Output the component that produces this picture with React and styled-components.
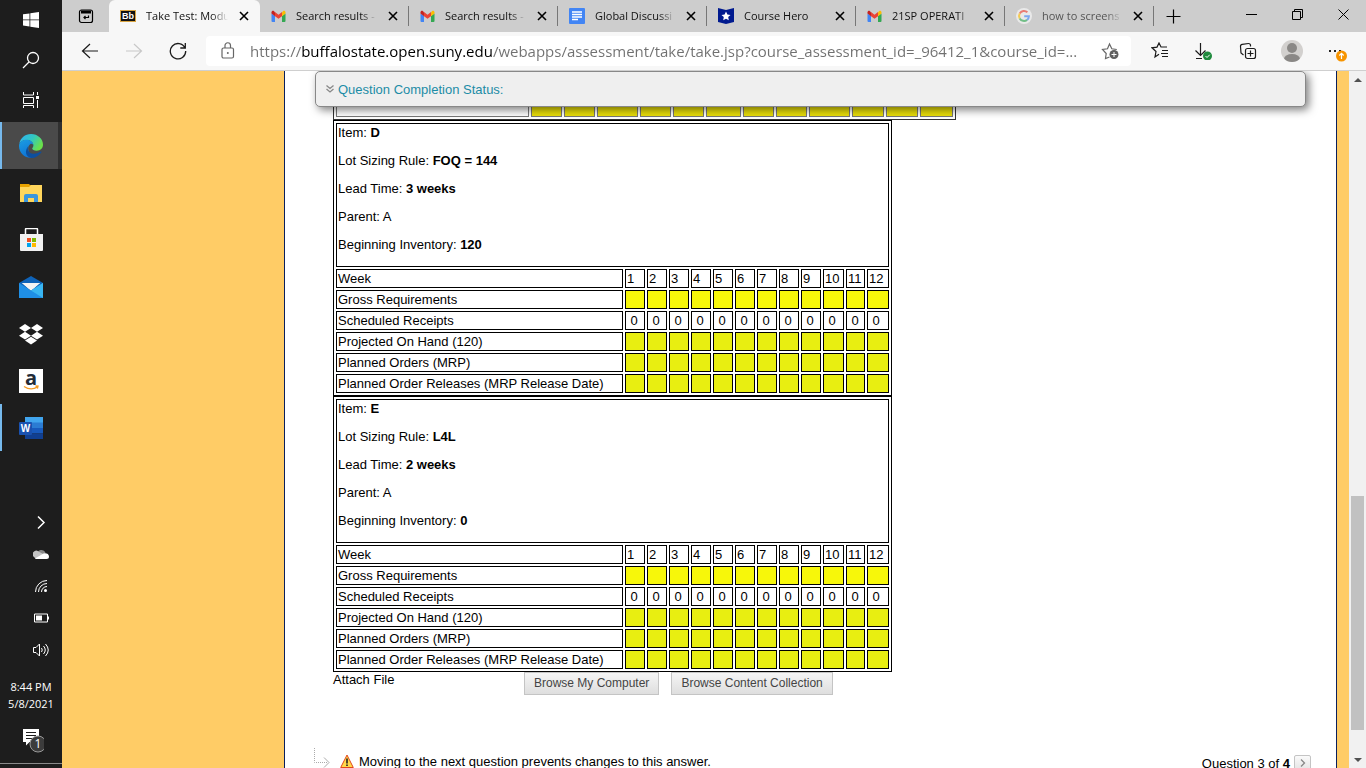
import styled, { createGlobalStyle } from "styled-components";

const SANS = `"Liberation Sans", Arial, sans-serif`;
const UI = `"Open Sans", "Noto Sans", sans-serif`;

const weeks = [1, 2, 3, 4, 5, 6, 7, 8, 9, 10, 11, 12];
const itemCols = [287, 20, 20, 20, 20, 20, 20, 20, 20, 20, 21, 19, 22];
const previousCols = [193, 31, 31, 41, 31, 31, 35, 31, 31, 41, 32, 32, 33];

const rows = [
  { label: "Gross Requirements", fill: "#f7f70a" },
  { label: "Scheduled Receipts", value: "\u00a00" },
  { label: "Projected On Hand (120)", fill: "#e8ee11" },
  { label: "Planned Orders (MRP)", fill: "#e8ee11" },
  { label: "Planned Order Releases (MRP Release Date)", fill: "#e8ee11" },
];

const tabs = [
  { title: "Take Test: Modu", icon: "bb", active: true },
  { title: "Search results -", icon: "gmail" },
  { title: "Search results -", icon: "gmail" },
  { title: "Global Discussi", icon: "docs" },
  { title: "Course Hero", icon: "hero" },
  { title: "21SP OPERATI", icon: "gmail" },
  { title: "how to screens", icon: "google", faded: true },
];

/* ---------- icons ---------- */

const Line = ({ size = 18, children, ...rest }) => (
  <svg width={size} height={size} viewBox={`0 0 ${size} ${size}`} fill="none" stroke="currentColor" aria-hidden="true" {...rest}>
    {children}
  </svg>
);

const favicons = {
  bb: (
    <svg width="16" height="16" viewBox="0 0 16 16">
      <rect x="0.5" y="2.5" width="15" height="11" fill="#111" stroke="#d9a441" />
      <text x="8" y="11" textAnchor="middle" fontFamily="Liberation Sans" fontWeight="700" fontSize="9" fill="#fff">Bb</text>
    </svg>
  ),
  gmail: (
    <svg width="15" height="15" viewBox="0 0 15 15">
      <path d="M0.5 4.5v7.5a1 1 0 0 0 1 1H4V7z" fill="#4285f4" />
      <path d="M14.5 4.5v7.5a1 1 0 0 1-1 1H11V7z" fill="#34a853" />
      <path d="M11 3.2v4l3.5-2.6V3.4c0-1.3-1.5-2-2.5-1.2z" fill="#fbbc04" />
      <path d="M4 3.2v4L0.5 4.6V3.4C0.5 2.1 2 1.4 3 2.2z" fill="#c5221f" />
      <path d="M4 3l3.5 2.7L11 3v4.2L7.5 9.8 4 7.2z" fill="#ea4335" />
    </svg>
  ),
  docs: (
    <svg width="16" height="16" viewBox="0 0 16 16">
      <rect width="16" height="16" rx="1" fill="#4285f4" />
      <path d="M3 4h10M3 6.500h10M3 9h10M3 11.500h6" stroke="#fff" strokeWidth="1.400" />
    </svg>
  ),
  hero: (
    <svg width="16" height="16" viewBox="0 0 16 16">
      <path d="M0 0l8 2 8-2v14l-8 2-8-2z" fill="#001a8f" />
      <path d="M8 3.600l1.400 3 3.100.4-2.300 2.100.6 3.200L8 10.700l-2.800 1.600.6-3.200L3.500 7l3.100-.4z" fill="#fff" />
    </svg>
  ),
  google: (
    <svg width="16" height="16" viewBox="0 0 16 16">
      <circle cx="8" cy="8" r="8" fill="#e9e9e9" />
      <g fill="none" strokeWidth="2" opacity="0.65">
        <path d="M11.400 4.300A5 5 0 0 0 3.700 5.600" stroke="#ea4335" />
        <path d="M3.700 5.600a5 5 0 0 0 0 4.800" stroke="#fbbc04" />
        <path d="M3.700 10.400a5 5 0 0 0 7.400 1.500" stroke="#34a853" />
        <path d="M11.100 11.900A5 5 0 0 0 12.900 8.200H8.200" stroke="#4285f4" />
      </g>
    </svg>
  ),
};

const WindowsLogo = () => (
  <svg width="16" height="16" viewBox="0 0 16 16" fill="#fff">
    <path d="M0 2.300l6.500-.9v6.100H0zM7.300 1.300L16 0v7.500H7.300zM0 8.300h6.500v6.200L0 13.600zM7.300 8.300H16V16l-8.700-1.300z" />
  </svg>
);

const TaskView = () => (
  <Line size={16}>
    <path d="M0.500 0v3h10V0M0.500 5.500h10v6h-10zM0.500 16v-2.500h10V16M14.500 0v3M14.500 8v8" />
    <rect x="13" y="4" width="3" height="3" fill="#fff" stroke="none" />
  </Line>
);

const EdgeLogo = () => (
  <svg width="24" height="24" viewBox="0 0 24 24">
    <defs>
      <linearGradient id="edgeTop" x1="0" y1="0" x2="1" y2="0.500">
        <stop offset="0.100" stopColor="#2fb4ee" />
        <stop offset="0.550" stopColor="#32c8c0" />
        <stop offset="1" stopColor="#6ae04a" />
      </linearGradient>
      <linearGradient id="edgeLeft" x1="0" y1="0" x2="0.400" y2="1">
        <stop offset="0" stopColor="#1b9de2" />
        <stop offset="1" stopColor="#0f74d6" />
      </linearGradient>
    </defs>
    <path d="M0.300 9.800C1.300 4 6 0 12 0c7 0 12 5 12 10.600 0 4-2.800 6.200-6.200 6.200-3 0-4.600-1.200-4.600-2.200 0-.8 1.200-1.200 1.200-3C14.400 8 11 6 7.500 6 3.500 6 1 8 .3 9.800z" fill="url(#edgeTop)" />
    <path d="M0 12C0 8 3.500 5.800 7.500 5.800c4.200 0 6.900 2.700 6.900 5.800-.3-1.500-1.700-2.400-3.200-1.400C8 12 8 20 16 22.800 9 26 0 21 0 12z" fill="url(#edgeLeft)" />
    <path d="M9.300 12c-1.500 3.500.6 7.500 5 7.700 3 .1 5.500-.9 7.500-2.200.5-.3.900.2.600.7C20 22 16 24 12.500 24 7 23.500 5 17 9.300 12z" fill="#0d4f9e" />
  </svg>
);

const FolderIcon = () => (
  <svg width="22" height="18" viewBox="0 0 22 18">
    <path d="M0 0h9l1 1h12v17H0z" fill="#e8a200" />
    <path d="M0 3h9l2-2h11v17H0z" fill="#ffd65c" />
    <path d="M4 18v-6a2 2 0 0 1 2-2h10a2 2 0 0 1 2 2v6h-4v-4H8v4z" fill="#3a96dd" />
  </svg>
);

const StoreIcon = () => (
  <svg width="23" height="24" viewBox="0 0 23 24">
    <path d="M5.500 7V1.500a1 1 0 0 1 1-1h10a1 1 0 0 1 1 1V7" fill="none" stroke="#fff" strokeWidth="1.500" />
    <path d="M0 6h23v16a1 1 0 0 1-1 1H1a1 1 0 0 1-1-1z" fill="#f2f2f2" />
    <path d="M7 10h4v4H7z" fill="#f25022" />
    <path d="M12 10h4v4h-4z" fill="#7fba00" />
    <path d="M7 15h4v4H7z" fill="#00a4ef" />
    <path d="M12 15h4v4h-4z" fill="#ffb900" />
  </svg>
);

const MailIcon = () => (
  <svg width="24" height="24" viewBox="0 0 24 24">
    <path d="M0 8l12-7 12 7v6H0z" fill="#0f63b8" />
    <path d="M3 8h18l-9 8z" fill="#f4f4f4" />
    <path d="M0 8l12 7.500L24 8v15H0z" fill="#1f8fe6" />
    <path d="M24 8v15L12 15.500z" fill="#39b6f2" />
    <path d="M3 8h18l-9 7z" fill="#f4f4f4" />
  </svg>
);

const DropboxIcon = () => (
  <svg width="24" height="22" viewBox="0 0 24 22" fill="#fff">
    <path d="M6 1l6 3.900-6 3.900-6-3.900zM18 1l6 3.900-6 3.900-6-3.900zM6 8.800l6 3.900-6 3.900-6-3.900zM18 8.800l6 3.900-6 3.900-6-3.900zM12 13.700l6 3.800-6 3.900-6-3.900z" />
  </svg>
);

const AmazonIcon = () => (
  <svg width="24" height="24" viewBox="0 0 24 24" overflow="visible">
    <rect width="24" height="24" fill="#fff" />
    <text x="12" y="16" textAnchor="middle" fontFamily="Open Sans" fontWeight="700" fontSize="20" fill="#222c38">a</text>
    <path d="M5 17.500c4.500 3 9.500 3 13.500.400M16.500 17l2.500.2-.6 2.400" fill="none" stroke="#f59b23" strokeWidth="1.300" />
  </svg>
);

const WordIcon = () => (
  <svg width="24" height="22" viewBox="0 0 24 22">
    <path d="M6 0h18v6H6z" fill="#41a5ee" />
    <path d="M6 5.500h18V11H6z" fill="#2b7cd3" />
    <path d="M6 11h18v5.500H6z" fill="#185abd" />
    <path d="M6 16.500h18V22H6z" fill="#103f91" />
    <rect y="5" width="13" height="13" rx="1" fill="#1a52b0" />
    <text x="6.500" y="15" textAnchor="middle" fontFamily="Liberation Sans" fontWeight="700" fontSize="10" fill="#fff">W</text>
  </svg>
);

const PersonIcon = () => (
  <svg width="22" height="22" viewBox="0 0 22 22">
    <clipPath id="avatar"><circle cx="11" cy="11" r="11" /></clipPath>
    <g clipPath="url(#avatar)">
      <rect width="22" height="22" fill="#d2d0ce" />
      <circle cx="11" cy="8" r="5" fill="#8a8886" />
      <path d="M3 19a8 5 0 0 1 16 0v1a11 11 0 0 1-16 0z" fill="#8a8886" />
    </g>
  </svg>
);

/* ---------- pieces ---------- */

const Plan = ({ name, rule, lead, inventory }) => (
  <PlanTable $width={559}>
    <colgroup>
      {itemCols.map((w, i) => <Col key={i} $w={w} />)}
    </colgroup>
    <tbody>
      <tr>
        <Cell colSpan={13}>
          <Info>Item: <b>{name}</b></Info>
          <Info>Lot Sizing Rule: <b>{rule}</b></Info>
          <Info>Lead Time: <b>{lead}</b></Info>
          <Info>Parent: A</Info>
          <Info>Beginning Inventory: <b>{inventory}</b></Info>
        </Cell>
      </tr>
      <tr>
        <Cell>Week</Cell>
        {weeks.map((w) => <Cell key={w}>{w}</Cell>)}
      </tr>
      {rows.map((row) => (
        <tr key={row.label}>
          <Cell>{row.label}</Cell>
          {weeks.map((w) => <Cell key={w} $fill={row.fill}>{row.value}</Cell>)}
        </tr>
      ))}
    </tbody>
  </PlanTable>
);

const Taskbar = () => (
  <Bar>
    <BarGroup>
      <BarButton $h={40} aria-label="Start"><WindowsLogo /></BarButton>
      <BarButton $h={40} aria-label="Search">
        <Line size={18} strokeWidth="1.300"><circle cx="11" cy="7" r="5.500" /><path d="M7 11L1 17" /></Line>
      </BarButton>
      <BarButton $h={40} aria-label="Task View"><TaskView /></BarButton>
    </BarGroup>
    <BarButton $active $open aria-label="Edge"><EdgeLogo /></BarButton>
    <BarButton aria-label="File Explorer"><FolderIcon /></BarButton>
    <BarButton aria-label="Store"><StoreIcon /></BarButton>
    <BarButton aria-label="Mail"><MailIcon /></BarButton>
    <BarButton aria-label="Dropbox"><DropboxIcon /></BarButton>
    <BarButton aria-label="Amazon"><AmazonIcon /></BarButton>
    <BarButton $open aria-label="Word"><WordIcon /></BarButton>
    <Tray>
      <BarButton $h={32} aria-label="Hidden icons">
        <Line size={16} strokeWidth="1.500"><path d="M5 2.500L11 8.500 5 14.500" /></Line>
      </BarButton>
      <BarButton $h={32} aria-label="OneDrive">
        <svg width="16" height="12" viewBox="0 0 16 12">
          <path d="M4 6a4.500 4.500 0 0 1 8.500-1.500L9 8z" fill="#8a8a8a" />
          <path d="M1 9a3.500 3.500 0 0 1 4.500-5.500L12 7 9 11H3z" fill="#c4c4c4" />
          <path d="M2 10.500L10.500 5.500c2-1 5.500 0 5.500 3a2.500 2.500 0 0 1-2.500 2.500H3z" fill="#fff" />
        </svg>
      </BarButton>
      <BarButton $h={32} aria-label="Network">
        <Line size={14}>
          <path d="M1.500 13A11.500 11.500 0 0 1 13 1.500M4.500 13A8.500 8.500 0 0 1 13 4.500M7.500 13A5.500 5.500 0 0 1 13 7.500" />
          <circle cx="11.500" cy="11.500" r="1.500" fill="#fff" stroke="none" />
        </Line>
      </BarButton>
      <BarButton $h={32} aria-label="Battery">
        <svg width="16" height="10" viewBox="0 0 16 10">
          <path d="M1.500 1h13v8h-13z" fill="none" stroke="#fff" />
          <path d="M3 2.500h6v5H3zM15 3.500h1v3h-1z" fill="#fff" />
        </svg>
      </BarButton>
      <BarButton $h={32} aria-label="Volume">
        <Line size={16}>
          <path d="M0.500 5.500h2.500l3.500-3.500v12L3 10.500H.5zM8.500 6q1.500 2 0 4M10.500 4q3.500 4 0 8M12.500 2q5.500 6 0 12" />
        </Line>
      </BarButton>
    </Tray>
    <Clock>
      <span>8:44 PM</span>
      <span>5/8/2021</span>
    </Clock>
    <BarButton $h={46} aria-label="Notifications">
      <svg width="26" height="26" viewBox="0 0 26 26">
        <path d="M5 2h16v13H11.500l-3.500 3.500V15H5z" fill="#fff" />
        <path d="M8 5.500h10M8 8.500h10M8 11.500h7" stroke="#1d1d1d" />
        <circle cx="20" cy="17" r="8" fill="#3c3c3c" stroke="#9a9a9a" transform="translate(0 0)" />
        <text x="20" y="21" textAnchor="middle" fontFamily="Open Sans" fontSize="12" fill="#fff">1</text>
      </svg>
    </BarButton>
    <ShowDesktop aria-label="Show desktop" />
  </Bar>
);

const TabStrip = () => (
  <Strip>
    <Pinned aria-label="Tab actions">
      <Line size={16} strokeWidth="1.200">
        <rect x="1.500" y="2" width="13" height="12.500" rx="2" />
        <path d="M3 4h10" strokeWidth="3" />
        <path d="M10.500 7.500v2H6M7.500 8L6 9.500 7.500 11" />
      </Line>
    </Pinned>
    {tabs.map((tab, i) => (
      <Tab key={i} $active={tab.active}>
        {favicons[tab.icon]}
        <TabTitle $faded={tab.faded}>{tab.title}</TabTitle>
        <TabClose aria-label="Close tab">
          <Line size={10} strokeWidth="1.600"><path d="M1 1l8 8M9 1L1 9" /></Line>
        </TabClose>
      </Tab>
    ))}
    <NewTab aria-label="New tab">
      <Line size={15} strokeWidth="1.200"><path d="M7.500 0.500v14M.5 7.500h14" /></Line>
    </NewTab>
    <WindowButtons>
      <WindowButton aria-label="Minimize"><Line size={11}><path d="M0 5.500h11" /></Line></WindowButton>
      <WindowButton aria-label="Restore">
        <Line size={11}><path d="M.5 2.500h8v8h-8zM2.500 2.500v-2h8v8h-2" /></Line>
      </WindowButton>
      <WindowButton aria-label="Close"><Line size={11}><path d="M.5.5l10 10M10.500.5l-10 10" /></Line></WindowButton>
    </WindowButtons>
  </Strip>
);

const Toolbar = () => (
  <Tools>
    <ToolButton aria-label="Back"><Line><path d="M17 9H1.500M9 2L1.500 9 9 16" strokeWidth="1.200" /></Line></ToolButton>
    <ToolButton $muted aria-label="Forward"><Line><path d="M1 9h15.500M9 2l7.500 7L9 16" strokeWidth="1.200" /></Line></ToolButton>
    <ToolButton aria-label="Refresh">
      <Line strokeWidth="1.300"><path d="M16 6A7.700 7.700 0 1 0 16.700 9M16.300 1v5h-5" /></Line>
    </ToolButton>
    <Address>
      <Line size={16} height="18" viewBox="0 0 16 18" strokeWidth="1.200">
        <rect x="2" y="6" width="11.500" height="10" rx="1.500" />
        <path d="M5 6V3.500a2.700 2.700 0 0 1 5.500 0V6" />
        <circle cx="7.800" cy="11" r="1" fill="currentColor" stroke="none" />
      </Line>
      <Url
        aria-label="Address"
        readOnly
        value="https://buffalostate.open.suny.edu/webapps/assessment/take/take.jsp?course_assessment_id=_96412_1&course_id=..."
      />
      <Line size={18}>
        <path d="M8.500 15l-4 1.500.7-5L1.500 7.500l5-.7L8.500 2l2.300 4.800 5 .7" strokeWidth="1.200" />
        <circle cx="13" cy="12.500" r="4.500" fill="#5f5f5f" stroke="none" />
        <path d="M13 10v5M10.500 12.500h5" stroke="#fff" />
      </Line>
    </Address>
    <Actions>
      <ToolButton aria-label="Favorites">
        <Line><path d="M8 12.200L4 15l1-5.500L1 5.800l5-.7L8 1l2 4h6M11 8.500h6M10 11.500h7M11 14.500h6" strokeWidth="1.200" /></Line>
      </ToolButton>
      <ToolButton aria-label="Downloads">
        <Line>
          <path d="M5.500 1v12M.5 8.500l5 5 5-5M1 16.500h6" strokeWidth="1.200" />
          <circle cx="12.500" cy="14" r="4.500" fill="#1e8a3c" stroke="none" />
          <path d="M10.500 14l1.500 1.500 2.800-2.800" stroke="#fff" />
        </Line>
      </ToolButton>
      <ToolButton aria-label="Collections">
        <Line strokeWidth="1.200">
          <rect x="6.500" y="6.500" width="10" height="10" rx="2" />
          <path d="M11.500 8.500v6M8.500 11.500h6M4.500 13L2 11 1.500 4.500a2 2 0 0 1 1.700-2.200L9.500 1.500a2 2 0 0 1 2 1.500v1.500" />
        </Line>
      </ToolButton>
      <ToolButton aria-label="Profile"><PersonIcon /></ToolButton>
      <ToolButton aria-label="Settings and more">
        <svg width="22" height="22" viewBox="0 0 22 22">
          <path d="M5 10h2v2H5zM10 10h2v2h-2zM15 10h2v2h-2z" transform="translate(-1 0)" fill="#222" />
          <circle cx="16.500" cy="16" r="5.500" fill="#f79400" />
          <path d="M16.500 19v-5.500M14.300 15.500l2.200-2.200 2.200 2.200" fill="none" stroke="#fff" strokeWidth="1.200" />
        </svg>
      </ToolButton>
    </Actions>
  </Tools>
);

const App = () => (
  <Desktop>
    <Global />
    <Taskbar />
    <Browser>
      <TabStrip />
      <Toolbar />
      <Viewport>
        <Paper>
          <Status href="#status">
            <Line size={8} stroke="#888"><path d="M.5.500L4 3.500 7.500.5M.5 4L4 7 7.500 4" strokeWidth="1.300" /></Line>
            Question Completion Status:
          </Status>
          <Answer>
            <PlanTable $width={623} $soft>
              <colgroup>
                {previousCols.map((w, i) => <Col key={i} $w={w} />)}
              </colgroup>
              <tbody>
                <tr>
                  <Cell $soft>Planned Orders (MRP)</Cell>
                  {weeks.map((w) => <Cell key={w} $soft $fill="#eadf08" />)}
                </tr>
              </tbody>
            </PlanTable>
            <Plan name="D" rule="FOQ = 144" lead="3 weeks" inventory="120" />
            <Plan name="E" rule="L4L" lead="2 weeks" inventory="0" />
            <Attach>
              <AttachLabel>Attach File</AttachLabel>
              <GreyButton>Browse My Computer</GreyButton>
              <GreyButton>Browse Content Collection</GreyButton>
            </Attach>
          </Answer>
          <Footer>
            <svg width="16" height="20" viewBox="0 0 16 20" fill="none" stroke="#aaa">
              <path d="M.5 0v14.500H14" strokeDasharray="1 1" />
              <path d="M10 9.500l5 5-5 5" />
            </svg>
            <svg width="14" height="14" viewBox="0 0 14 14">
              <path d="M7 1L13.300 13.500H.7z" fill="#ffd84a" stroke="#e2481c" strokeLinejoin="round" />
              <path d="M7 4.500v5M7 10.500V12" stroke="#222" strokeWidth="1.600" />
            </svg>
            <Notice>Moving to the next question prevents changes to this answer.</Notice>
            <Pager>
              <span>Question 3 of <b>4</b></span>
              <NextButton aria-label="Next question">
                <Line size={8} stroke="#888"><path d="M2 .5L5.500 4 2 7.500" strokeWidth="1.300" /></Line>
              </NextButton>
            </Pager>
          </Footer>
        </Paper>
        <Scrollbar>
          <ScrollArrow aria-label="Scroll up"><svg width="8" height="4" viewBox="0 0 8 4"><path d="M0 4l4-4 4 4z" fill="#505050" /></svg></ScrollArrow>
          <Gap $grow={408} />
          <Thumb />
          <Gap $grow={21} />
          <ScrollArrow aria-label="Scroll down"><svg width="8" height="4" viewBox="0 0 8 4"><path d="M0 0l4 4 4-4z" fill="#505050" /></svg></ScrollArrow>
        </Scrollbar>
      </Viewport>
    </Browser>
  </Desktop>
);

/* ---------- styles ---------- */

const Global = createGlobalStyle`
  * {
    box-sizing: border-box;
  }

  body {
    margin: 0;
    overflow: hidden;
  }

  button {
    margin: 0;
    padding: 0;
    border: 0;
    background: none;
    color: inherit;
    font: inherit;
  }

  svg {
    display: block;
    flex: none;
  }
`;

const Desktop = styled.div`
  display: flex;
  height: 100vh;
  font: 13px/15px ${SANS};
  color: #000;
`;

const Bar = styled.nav`
  display: flex;
  flex-direction: column;
  flex: none;
  width: 62px;
  background: #1d1d1d;
  color: #fff;
`;

const BarGroup = styled.div`
  padding-bottom: 2px;
`;

const BarButton = styled.button`
  display: flex;
  align-items: center;
  justify-content: center;
  flex: none;
  width: 100%;
  height: ${(p) => p.$h || 47}px;
  background: ${(p) => (p.$active ? "linear-gradient(90deg, #4a4a4a 58px, #303030 58px)" : "none")};
  box-shadow: ${(p) => (p.$open ? "inset 2px 0 #76b9ed" : "none")};
`;

const Tray = styled.div`
  margin-top: auto;
  padding-left: 20px;
`;

const Clock = styled.div`
  display: flex;
  flex-direction: column;
  align-items: center;
  padding: 12px 0 5px;
  font: 11px/17px ${UI};
`;

const ShowDesktop = styled.button`
  && {
    flex: none;
    height: 5px;
    border-top: 1px solid #8a8a8a;
  }
`;

const Browser = styled.div`
  display: flex;
  flex-direction: column;
  flex: 1;
  min-width: 0;
`;

const Strip = styled.div`
  display: flex;
  flex: none;
  height: 32px;
  background: #cdcdcd;
`;

const Pinned = styled.button`
  display: flex;
  align-items: center;
  justify-content: center;
  width: 47px;
`;

const Tab = styled.div`
  display: flex;
  align-items: center;
  flex: 0 1 ${(p) => (p.$active ? 151 : 149)}px;
  min-width: 0;
  padding: 0 10px 0 11px;
  gap: 10px;
  background: ${(p) => (p.$active ? "#f7f7f7" : "none")};
  border-radius: ${(p) => (p.$active ? "6px 6px 0 0" : 0)};

  & + & {
    background: linear-gradient(#777, #777) right center / 1px 20px no-repeat;
  }
`;

const TabTitle = styled.span`
  flex: 1;
  overflow: hidden;
  white-space: nowrap;
  font: 11px/20px ${UI};
  color: ${(p) => (p.$faded ? "#555" : "#111")};
  mask-image: linear-gradient(90deg, #000 80%, transparent);
`;

const TabClose = styled.button`
  display: flex;
  padding: 1px;
`;

const NewTab = styled.button`
  display: flex;
  align-items: center;
  justify-content: center;
  width: 38px;
`;

const WindowButtons = styled.div`
  display: flex;
  margin-left: auto;
`;

const WindowButton = styled.button`
  display: flex;
  align-items: center;
  justify-content: center;
  width: 46px;
  height: 29px;
`;

const Tools = styled.div`
  display: flex;
  align-items: center;
  flex: none;
  height: 39px;
  padding-left: 6px;
  background: #f7f7f7;
  border-bottom: 1px solid #cfcfcf;
`;

const ToolButton = styled.button`
  display: flex;
  align-items: center;
  justify-content: center;
  width: 44px;
  height: 30px;
  color: ${(p) => (p.$muted ? "#c8c8c8" : "#1b1b1b")};
`;

const Address = styled.div`
  display: flex;
  align-items: center;
  flex: 1;
  height: 30px;
  margin-left: 6px;
  padding: 0 12px 0 14px;
  background: #fff;
  border-radius: 4px;
  color: #666;
`;

/* host name is darker than the rest of the address */
const Url = styled.input`
  flex: 1;
  min-width: 0;
  margin: 0 8px 0 14px;
  padding: 0;
  border: 0;
  outline: 0;
  font: 15px/24px ${UI};
  color: transparent;
  background: linear-gradient(90deg, #707070 52px, #000 52px 242px, #707070 242px);
  background-clip: text;
`;

const Actions = styled.div`
  display: flex;
  padding: 0 8px 0 7px;
`;

const Viewport = styled.main`
  display: flex;
  flex: 1;
  min-height: 0;
  background: #ffcc66;
`;

const Paper = styled.div`
  position: relative;
  display: flex;
  flex-direction: column;
  flex: 1;
  min-width: 0;
  margin: 0 12px 0 222px;
  overflow: hidden;
  background: #fff;
  border: solid #0a1f5c;
  border-width: 0 1px;
`;

const Status = styled.a`
  position: absolute;
  top: 0;
  left: 30px;
  right: 30px;
  display: flex;
  align-items: center;
  gap: 4px;
  height: 36px;
  padding: 0 10px;
  background: #efefef;
  border: 1px solid #888;
  border-radius: 5px;
  box-shadow: 3px 3px 9px rgba(0, 0, 0, 0.5);
  color: #1c8ca6;
  text-decoration: none;
`;

const Answer = styled.section`
  padding: 16px 0 0 48px;
`;

const PlanTable = styled.table`
  width: ${(p) => p.$width}px;
  table-layout: fixed;
  border: 1px solid ${(p) => (p.$soft ? "#333" : "#000")};
  border-spacing: 2px;
  font-size: 13px;
`;

const Col = styled.col`
  width: ${(p) => p.$w}px;
`;

const Cell = styled.td`
  height: ${(p) => (p.$soft ? 27 : 19)}px;
  padding: 1px;
  border: 1px solid ${(p) => (p.$soft ? "#777" : "#000")};
  background: ${(p) => p.$fill || "#fff"};
  vertical-align: ${(p) => (p.$soft ? "top" : "middle")};
  white-space: nowrap;
`;

const Info = styled.p`
  margin: 0 0 13px;
`;

const Attach = styled.div`
  display: flex;
`;

const AttachLabel = styled.span`
  width: 191px;
`;

const GreyButton = styled.button`
  && {
    height: 23px;
    margin-right: 12px;
    padding: 0 9px;
    border: 1px solid #c4c4c4;
    background: linear-gradient(#f5f5f5, #dedede);
    font-size: 12px;
    color: #444;
  }
`;

const Footer = styled.footer`
  display: flex;
  align-items: flex-end;
  gap: 5px;
  height: 20px;
  margin-top: auto;
  padding: 0 25px 0 29px;

  svg + svg {
    margin-left: 5px;
  }
`;

const Notice = styled.span`
  height: 14px;
`;

const Pager = styled.div`
  display: flex;
  align-items: center;
  gap: 4px;
  height: 10px;
  margin-left: auto;
`;

const NextButton = styled.button`
  && {
    display: flex;
    align-items: center;
    justify-content: center;
    width: 17px;
    height: 17px;
    border: 1px solid #c4c4c4;
    border-radius: 2px;
    background: linear-gradient(#fafafa, #e2e2e2);
  }
`;

const Scrollbar = styled.div`
  display: flex;
  flex-direction: column;
  flex: none;
  width: 17px;
  background: #f1f1f1;
`;

const ScrollArrow = styled.button`
  display: flex;
  align-items: center;
  justify-content: center;
  height: 17px;
`;

const Gap = styled.div`
  flex: ${(p) => p.$grow} 0 0;
`;

const Thumb = styled.div`
  flex: 234 0 0;
  margin: 0 2px;
  background: #c1c1c1;
`;

export default App;
